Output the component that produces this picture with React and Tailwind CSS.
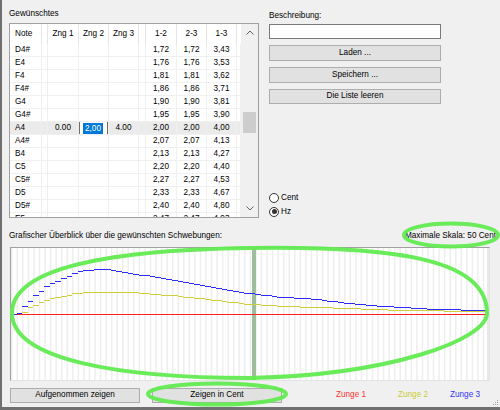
import React from 'react'

const cols = 'grid-cols-[32px_6px_31px_30px_30px_7px_31px_30px_30px_4px]'

const rows = [
  ['D4#', '', '', '', '1,72', '1,72', '3,43'],
  ['E4', '', '', '', '1,76', '1,76', '3,53'],
  ['F4', '', '', '', '1,81', '1,81', '3,62'],
  ['F4#', '', '', '', '1,86', '1,86', '3,71'],
  ['G4', '', '', '', '1,90', '1,90', '3,81'],
  ['G4#', '', '', '', '1,95', '1,95', '3,90'],
  ['A4', '0.00', '2,00', '4.00', '2,00', '2,00', '4,00'],
  ['A4#', '', '', '', '2,07', '2,07', '4,13'],
  ['B4', '', '', '', '2,13', '2,13', '4,27'],
  ['C5', '', '', '', '2,20', '2,20', '4,40'],
  ['C5#', '', '', '', '2,27', '2,27', '4,53'],
  ['D5', '', '', '', '2,33', '2,33', '4,67'],
  ['D5#', '', '', '', '2,40', '2,40', '4,80'],
  ['E5', '', '', '', '2,47', '2,47', '4,93'],
]

// heights above the zero line, read off the reference
const blueH = [[11, 0], [20, 1], [25, 8], [30, 13], [35, 18], [40, 22], [50, 31], [57, 32], [63, 36], [71, 38], [77, 42], [86, 44], [100, 45], [110, 45], [120, 43], [150, 38], [200, 29], [250, 21], [283, 17], [317, 15], [350, 11], [383, 8], [433, 5], [487, 4]]
const yellowH = [[11, 0], [22, 0], [27, 4], [31, 7], [40, 11], [50, 15], [60, 17], [75, 21], [90, 22], [130, 22], [170, 19], [200, 16], [250, 10], [283, 8], [350, 6], [400, 4], [487, 3]]

function interp(pts, x) {
  if (x <= pts[0][0]) return pts[0][1]
  for (let i = 1; i < pts.length; i++) {
    const [x1, y1] = pts[i]
    const [x0, y0] = pts[i - 1]
    if (x <= x1) return y0 + ((y1 - y0) * (x - x0)) / (x1 - x0)
  }
  return pts[pts.length - 1][1]
}

function steps(pts, start) {
  let d = ''
  for (let k = 0; k < 86; k++) {
    const xa = 11 + k * 5.55
    const xb = Math.min(xa + 5.55, 487)
    if (xb < start) continue
    const y = Math.round(314 - interp(pts, (xa + xb) / 2)) + 0.5
    d += `M${Math.max(xa, start).toFixed(2)} ${y}H${xb.toFixed(2)}`
  }
  return d
}

function Chevron({ down }) {
  return (
    <svg width="8" height="5" viewBox="0 0 8 5">
      <path d={down ? 'M0.5 0.5L4 4L7.5 0.5' : 'M0.5 4.5L4 1L7.5 4.5'} fill="none" stroke="#606060" strokeWidth="1" />
    </svg>
  )
}

function Cell({ children, className = '' }) {
  return <div className={`border-r border-b border-[#f0f0f0] leading-[12px] ${className}`}>{children}</div>
}

function Grid() {
  return (
    <div className="h-[195px] border border-[#a0a0a0] bg-white flex overflow-hidden">
      <div className="w-[231px] overflow-hidden">
        <div className={`grid ${cols} h-[20px] leading-[20px]`}>
          <div className="pl-[5px] border-r border-[#e5e5e5]">Note</div>
          <div className="border-r border-[#e5e5e5]" />
          <div className="text-center border-r border-[#e5e5e5]">Zng 1</div>
          <div className="text-center border-r border-[#e5e5e5]">Zng 2</div>
          <div className="text-center border-r border-[#e5e5e5]">Zng 3</div>
          <div className="border-r border-[#e5e5e5]" />
          <div className="text-center border-r border-[#e5e5e5]">1-2</div>
          <div className="text-center border-r border-[#e5e5e5]">2-3</div>
          <div className="text-center border-r border-[#e5e5e5]">1-3</div>
          <div />
        </div>
        {rows.map((r) => {
          const sel = r[0] === 'A4'
          return (
            <div key={r[0]} className={`grid ${cols} h-[13px] ${sel ? 'bg-[#ebebeb]' : 'bg-white'}`}>
              <Cell className="pl-[5px]">{r[0]}</Cell>
              <Cell />
              <Cell className="text-center">{r[1]}</Cell>
              <Cell className="text-center">
                {sel && (
                  <div className="h-[12px] w-[29px] bg-white border-l border-r border-[#6a6a6a] flex items-center pl-[3px]">
                    <span className="bg-[#0078d7] text-white px-[2px] leading-[11px]">{r[2]}</span>
                  </div>
                )}
              </Cell>
              <Cell className="text-center">{r[3]}</Cell>
              <Cell />
              <Cell className="text-center">{r[4]}</Cell>
              <Cell className="text-center">{r[5]}</Cell>
              <Cell className="text-center">{r[6]}</Cell>
              <Cell />
            </div>
          )
        })}
      </div>
      <div className="w-[17px] bg-[#f0f0f0] flex flex-col">
        <div className="h-[17px] flex items-center justify-center"><Chevron /></div>
        <div className="flex-1">
          <div className="mt-[71px] h-[21px] mx-[2px] bg-[#cdcdcd]" />
        </div>
        <div className="h-[17px] flex items-center justify-center"><Chevron down /></div>
      </div>
    </div>
  )
}

function Btn({ children, className = '' }) {
  return (
    <div className={`flex items-center justify-center bg-[#e1e1e1] border border-[#adadad] ${className}`}>
      {children}
    </div>
  )
}

function Radio({ checked, label }) {
  return (
    <div className="h-[11px] flex items-center gap-[2px]">
      <div className="w-[10px] h-[10px] rounded-full border border-[#333] bg-white flex items-center justify-center">
        {checked && <div className="w-[5px] h-[5px] rounded-full bg-[#333]" />}
      </div>
      <span className="leading-[10px]">{label}</span>
    </div>
  )
}

function Chart() {
  const stripes = []
  for (let k = 0; k <= 86; k++) stripes.push(11 + k * 5.55)
  return (
    <div className="ml-[8px] mt-[6px] w-[480px] h-[134px] border-t border-l border-[#a0a0a0] border-b border-r border-b-[#e3e3e3] border-r-[#e3e3e3] bg-white">
      <svg width="478" height="132" viewBox="11 248 478 132" className="block">
        {stripes.map((x) => (
          <rect key={x} x={x} y="248" width="1.5" height="132" fill="#eeeeee" />
        ))}
        <rect x="487" y="248" width="2" height="132" fill="#e8e8e8" />
        <rect x="252" y="248" width="4" height="132" fill="#9dbd9d" />
        <path d="M11 314.5H487" stroke="#ff2020" strokeWidth="1" shapeRendering="crispEdges" />
        <path d={steps(yellowH, 22)} stroke="#d2cd3a" strokeWidth="1" fill="none" shapeRendering="crispEdges" />
        <path d={steps(blueH, 11)} stroke="#2b2bff" strokeWidth="1" fill="none" shapeRendering="crispEdges" />
      </svg>
    </div>
  )
}

export default function App() {
  return (
    <div
      className="relative w-[500px] h-[410px] bg-[#f0f0f0] overflow-hidden border-l-2 border-b-[3px] border-[#707070] text-[8.2px] text-black"
      style={{ fontFamily: '"Liberation Sans", Arial, sans-serif' }}
    >
      <div className="flex h-[219px]">
        <div className="ml-[7px] w-[250px] pt-[9px]">
          <div className="h-[10px] leading-[10px]">Gewünschtes</div>
          <div className="mt-[4px]">
            <Grid />
          </div>
        </div>
        <div className="ml-[10px] w-[172px] pt-[11px] flex flex-col">
          <div className="h-[10px] leading-[10px]">Beschreibung:</div>
          <div className="mt-[3px] h-[15px] bg-white border border-[#7a7a7a]" />
          <Btn className="mt-[6px] h-[16px]">Laden ...</Btn>
          <Btn className="mt-[6px] h-[16px]">Speichern ...</Btn>
          <Btn className="mt-[6px] h-[15px]">Die Liste leeren</Btn>
          <div className="mt-[88px] flex flex-col gap-[3px]">
            <Radio label="Cent" />
            <Radio checked label="Hz" />
          </div>
        </div>
      </div>

      <div className="mt-[12px] h-[10px] leading-[10px] flex justify-between pl-[7px] pr-[4px]">
        <span>Grafischer Überblick über die gewünschten Schwebungen:</span>
        <span>Maximale Skala: 50 Cent</span>
      </div>

      <Chart />

      <div className="mt-[7px] h-[15px] flex items-center">
        <Btn className="ml-[8px] w-[130px] h-[15px]">Aufgenommen zeigen</Btn>
        <Btn className="ml-[12px] w-[130px] h-[15px] border-[#0078d7]">Zeigen in Cent</Btn>
        <span className="ml-[54px] w-[62px] text-[#ff3333]">Zunge 1</span>
        <span className="w-[52px] text-[#cccc33]">Zunge 2</span>
        <span className="text-[#3333ff]">Zunge 3</span>
      </div>

      <svg className="absolute right-[1px] bottom-[1px]" width="8" height="8" viewBox="0 0 8 8">
        {[[6, 2], [6, 4], [4, 4], [6, 6], [4, 6], [2, 6]].map(([x, y]) => (
          <rect key={`${x}-${y}`} x={x} y={y} width="1" height="1" fill="#a0a0a0" />
        ))}
      </svg>

      <svg className="absolute -left-[2px] top-0 pointer-events-none" width="500" height="410" viewBox="0 0 500 410">
        <g fill="none" stroke="#62ea50" strokeWidth="4" strokeOpacity="0.95">
          <path d="M12 313C12 270 100 250 250 248C400 246 487 260 487 313C487 340 390 375 250 378C120 378 12 360 12 313Z" />
          <ellipse cx="451" cy="235" rx="47" ry="11.5" />
          <ellipse cx="217" cy="394" rx="69" ry="10.5" />
        </g>
      </svg>
    </div>
  )
}
